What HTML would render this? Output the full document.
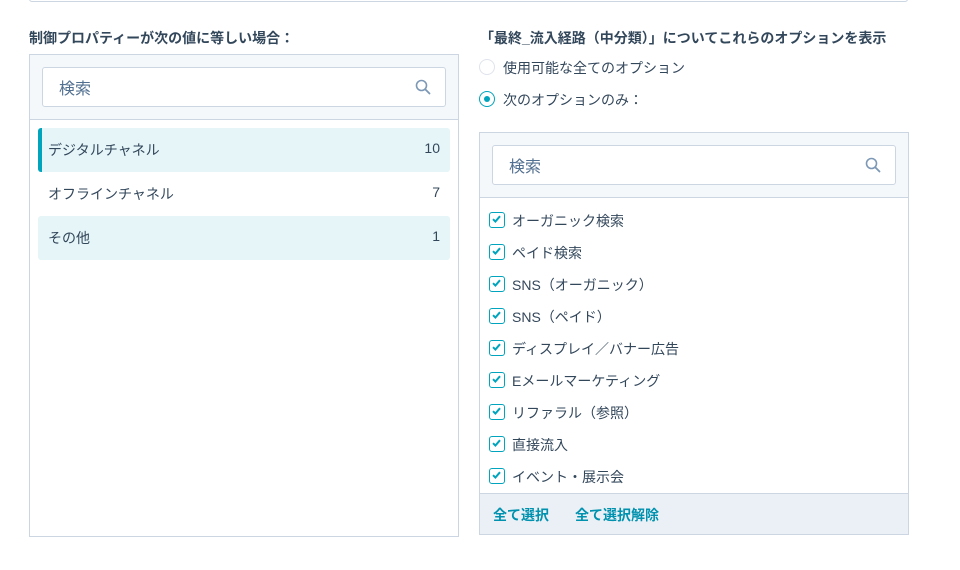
<!DOCTYPE html>
<html><head><meta charset="utf-8"><style>
*{box-sizing:border-box;margin:0;padding:0}
body{width:960px;height:570px;background:#fff;font-family:"Liberation Sans","Noto Sans CJK JP",sans-serif;color:#33475b;position:relative;overflow:hidden;font-size:14px}
.abs{position:absolute}
.top{left:29px;top:-10px;width:879px;height:12px;border:1px solid #cbd6e2;border-top:none;border-radius:0 0 3px 3px}
.h{font-weight:bold;font-size:14px;color:#33475b}
.panel{border:1px solid #cbd6e2;background:#fff}
.ph{position:absolute;left:0;top:0;right:0;height:65px;background:#f5f8fa;border-bottom:1px solid #cbd6e2}
.search{position:absolute;left:12px;right:12px;top:12px;height:40px;background:#fff;border:1px solid #cbd6e2;border-radius:3px;font-size:16px;color:#516f90;padding:7px 0 0 16px}
.search svg{position:absolute;right:14px;top:11px}
.row{position:absolute;left:8px;right:8px;height:44px;padding:12px 10px;font-size:14px}
.row span{position:absolute;right:10px;top:12px}
.sel{background:#e5f5f8;border-radius:3px}
.cb{position:absolute;left:9px;font-size:14px;padding-left:23px;line-height:18px}
.cb:before{content:"";position:absolute;left:0;top:0;width:14px;height:14px;border:1.5px solid #00a4bd;border-radius:3px}
.cb svg{position:absolute;left:3px;top:3px}
.foot{position:absolute;left:0;right:0;bottom:0;height:41px;background:#eaf0f6;border-top:1px solid #cbd6e2;font-weight:bold;color:#0091ae;font-size:14px}
</style></head><body>
<div class="abs top"></div>
<div class="abs h" style="left:29px;top:28px">制御プロパティーが次の値に等しい場合：</div>
<div class="abs panel" style="left:29px;top:54px;width:430px;height:483px">
 <div class="ph"><div class="search">検索<svg width="16" height="16" viewBox="0 0 16 16"><circle cx="6.5" cy="6.5" r="5" fill="none" stroke="#7c98b6" stroke-width="1.6"/><path d="M10.2 10.2L14.5 14.5" stroke="#7c98b6" stroke-width="1.8" stroke-linecap="round"/></svg></div></div>
 <div class="row sel" style="top:73px;border-left:4px solid #00a4bd;padding-left:6px">デジタルチャネル<span>10</span></div>
 <div class="row" style="top:117px">オフラインチャネル<span>7</span></div>
 <div class="row sel" style="top:161px">その他<span>1</span></div>
</div>
<div class="abs h" style="left:480px;top:28px">「最終_流入経路（中分類）」についてこれらのオプションを表示</div>
<div class="abs" style="left:479px;top:59px;width:16px;height:16px;border:1px solid #dfe3eb;border-radius:50%"></div>
<div class="abs" style="left:503px;top:58px;font-size:14px">使用可能な全てのオプション</div>
<div class="abs" style="left:479px;top:91px;width:16px;height:16px;border:1.5px solid #00a4bd;border-radius:50%"><div style="position:absolute;left:3.5px;top:3.5px;width:6px;height:6px;background:#00a4bd;border-radius:50%"></div></div>
<div class="abs" style="left:503px;top:90px;font-size:14px">次のオプションのみ：</div>
<div class="abs panel" style="left:479px;top:132px;width:430px;height:403px">
 <div class="ph"><div class="search">検索<svg width="16" height="16" viewBox="0 0 16 16"><circle cx="6.5" cy="6.5" r="5" fill="none" stroke="#7c98b6" stroke-width="1.6"/><path d="M10.2 10.2L14.5 14.5" stroke="#7c98b6" stroke-width="1.8" stroke-linecap="round"/></svg></div></div>
 <div class="cb" style="top:79px"><svg width="9" height="8" viewBox="0 0 9 8"><path d="M1 4.2L3.4 6.5L8 1.2" fill="none" stroke="#00a4bd" stroke-width="2"/></svg>オーガニック検索</div>
 <div class="cb" style="top:111px"><svg width="9" height="8" viewBox="0 0 9 8"><path d="M1 4.2L3.4 6.5L8 1.2" fill="none" stroke="#00a4bd" stroke-width="2"/></svg>ペイド検索</div>
 <div class="cb" style="top:143px"><svg width="9" height="8" viewBox="0 0 9 8"><path d="M1 4.2L3.4 6.5L8 1.2" fill="none" stroke="#00a4bd" stroke-width="2"/></svg>SNS（オーガニック）</div>
 <div class="cb" style="top:175px"><svg width="9" height="8" viewBox="0 0 9 8"><path d="M1 4.2L3.4 6.5L8 1.2" fill="none" stroke="#00a4bd" stroke-width="2"/></svg>SNS（ペイド）</div>
 <div class="cb" style="top:207px"><svg width="9" height="8" viewBox="0 0 9 8"><path d="M1 4.2L3.4 6.5L8 1.2" fill="none" stroke="#00a4bd" stroke-width="2"/></svg>ディスプレイ／バナー広告</div>
 <div class="cb" style="top:239px"><svg width="9" height="8" viewBox="0 0 9 8"><path d="M1 4.2L3.4 6.5L8 1.2" fill="none" stroke="#00a4bd" stroke-width="2"/></svg>Eメールマーケティング</div>
 <div class="cb" style="top:271px"><svg width="9" height="8" viewBox="0 0 9 8"><path d="M1 4.2L3.4 6.5L8 1.2" fill="none" stroke="#00a4bd" stroke-width="2"/></svg>リファラル（参照）</div>
 <div class="cb" style="top:303px"><svg width="9" height="8" viewBox="0 0 9 8"><path d="M1 4.2L3.4 6.5L8 1.2" fill="none" stroke="#00a4bd" stroke-width="2"/></svg>直接流入</div>
 <div class="cb" style="top:335px"><svg width="9" height="8" viewBox="0 0 9 8"><path d="M1 4.2L3.4 6.5L8 1.2" fill="none" stroke="#00a4bd" stroke-width="2"/></svg>イベント・展示会</div>
 <div class="foot"><span style="position:absolute;left:13px;top:11px">全て選択</span><span style="position:absolute;left:95px;top:11px">全て選択解除</span></div>
</div>
</body></html>
